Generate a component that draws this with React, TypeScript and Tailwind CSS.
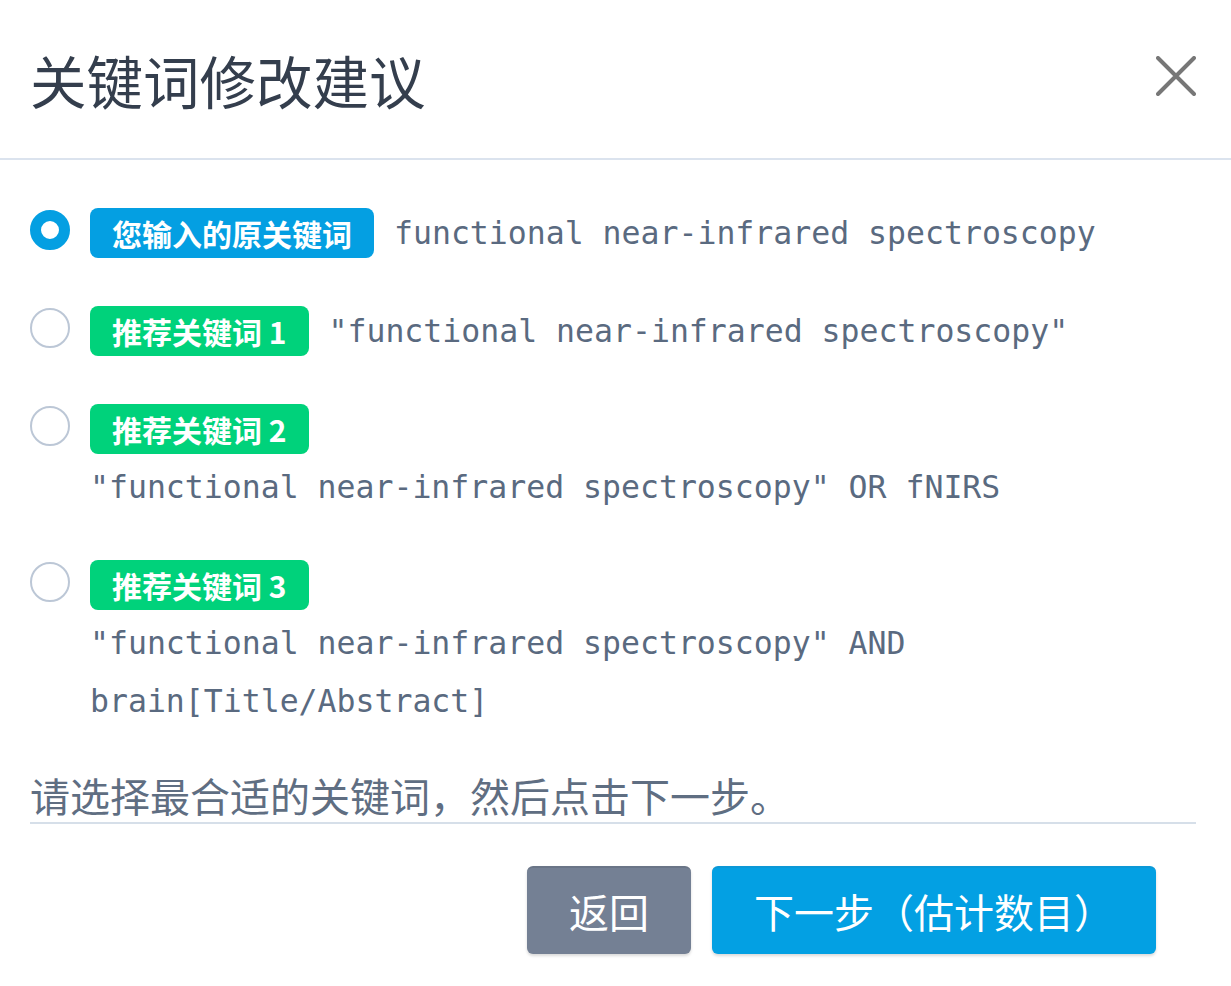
import { useState } from "react";

const cjk = "font-['Noto_Sans_CJK_SC','Noto_Sans',sans-serif]";
const mono = "font-['DejaVu_Sans_Mono','Liberation_Mono',monospace]";

type Option = { label: string; tone: "blue" | "green"; text: string };

const options: Option[] = [
  { label: "您输入的原关键词", tone: "blue", text: "functional near-infrared spectroscopy" },
  { label: "推荐关键词 1", tone: "green", text: '"functional near-infrared spectroscopy"' },
  { label: "推荐关键词 2", tone: "green", text: '"functional near-infrared spectroscopy" OR fNIRS' },
  { label: "推荐关键词 3", tone: "green", text: '"functional near-infrared spectroscopy" AND brain[Title/Abstract]' },
];

const Radio = ({ checked }: { checked: boolean }) => (
  <span
    className={
      checked
        ? "mt-[6px] block h-[40px] w-[40px] flex-none rounded-full border-[11px] border-[#049fe2] bg-white"
        : "mt-[6px] block h-[40px] w-[40px] flex-none rounded-full border-2 border-[#bcc7d6] bg-white"
    }
  />
);

export default function App() {
  const [selected, setSelected] = useState(0);

  return (
    <div className={`min-h-screen w-full bg-white ${cjk}`}>
      <header className="flex h-[160px] items-center justify-between border-b-2 border-[#dbe3ee] pl-[30px] pr-[35px]">
        <h1 className="text-[56.5px] leading-none font-normal text-[#343e4d]">关键词修改建议</h1>
        <button className="-mt-[6px] flex h-[40px] w-[40px] items-center justify-center">
          <svg width="40" height="40" viewBox="0 0 40 40" fill="none" stroke="#777777" strokeWidth="4" strokeLinecap="round">
            <path d="M2 2 L38 38 M38 2 L2 38" />
          </svg>
        </button>
      </header>

      <div className="pl-[30px] pr-[35px] pt-[44px]">
        <div className="flex flex-col gap-[40px]">
          {options.map((opt, i) => (
            <div key={opt.label} className="flex cursor-pointer items-start gap-[20px]" onClick={() => setSelected(i)}>
              <Radio checked={selected === i} />
              <div className="flex min-w-0 flex-1 flex-wrap items-center">
                <span className="mr-[20px] flex h-[58px] items-center">
                  <span
                    className={`inline-flex h-[50px] items-center rounded-[8px] px-[22px] text-[30px] font-bold leading-none text-white ${
                      opt.tone === "blue" ? "bg-[#049fe2]" : "bg-[#00d27b]"
                    }`}
                  >
                    {opt.label}
                  </span>
                </span>
                <span className={`${mono} text-[31.5px] leading-[58px] text-[#5a6a80]`}>{opt.text}</span>
              </div>
            </div>
          ))}
        </div>

        <p className="mt-[38px] border-b-2 border-[#d6dfe9] text-[40px] leading-[54px] text-[#5f6e82]">
          请选择最合适的关键词，然后点击下一步。
        </p>

        <div className="mt-[42px] flex justify-end gap-[21px] pr-[40px]">
          <button className="h-[88px] rounded-[6px] border-t-2 border-[#6a7587] bg-[#748094] px-[42px] text-[40px] leading-none text-white shadow-[0_2px_3px_rgba(0,0,0,0.15)]">
            返回
          </button>
          <button className="h-[88px] rounded-[6px] border-t-2 border-[#0b98d6] bg-[#03a0e3] px-[42px] text-[40px] leading-none text-white shadow-[0_2px_3px_rgba(0,0,0,0.15)]">
            下一步（估计数目）
          </button>
        </div>
      </div>
    </div>
  );
}
